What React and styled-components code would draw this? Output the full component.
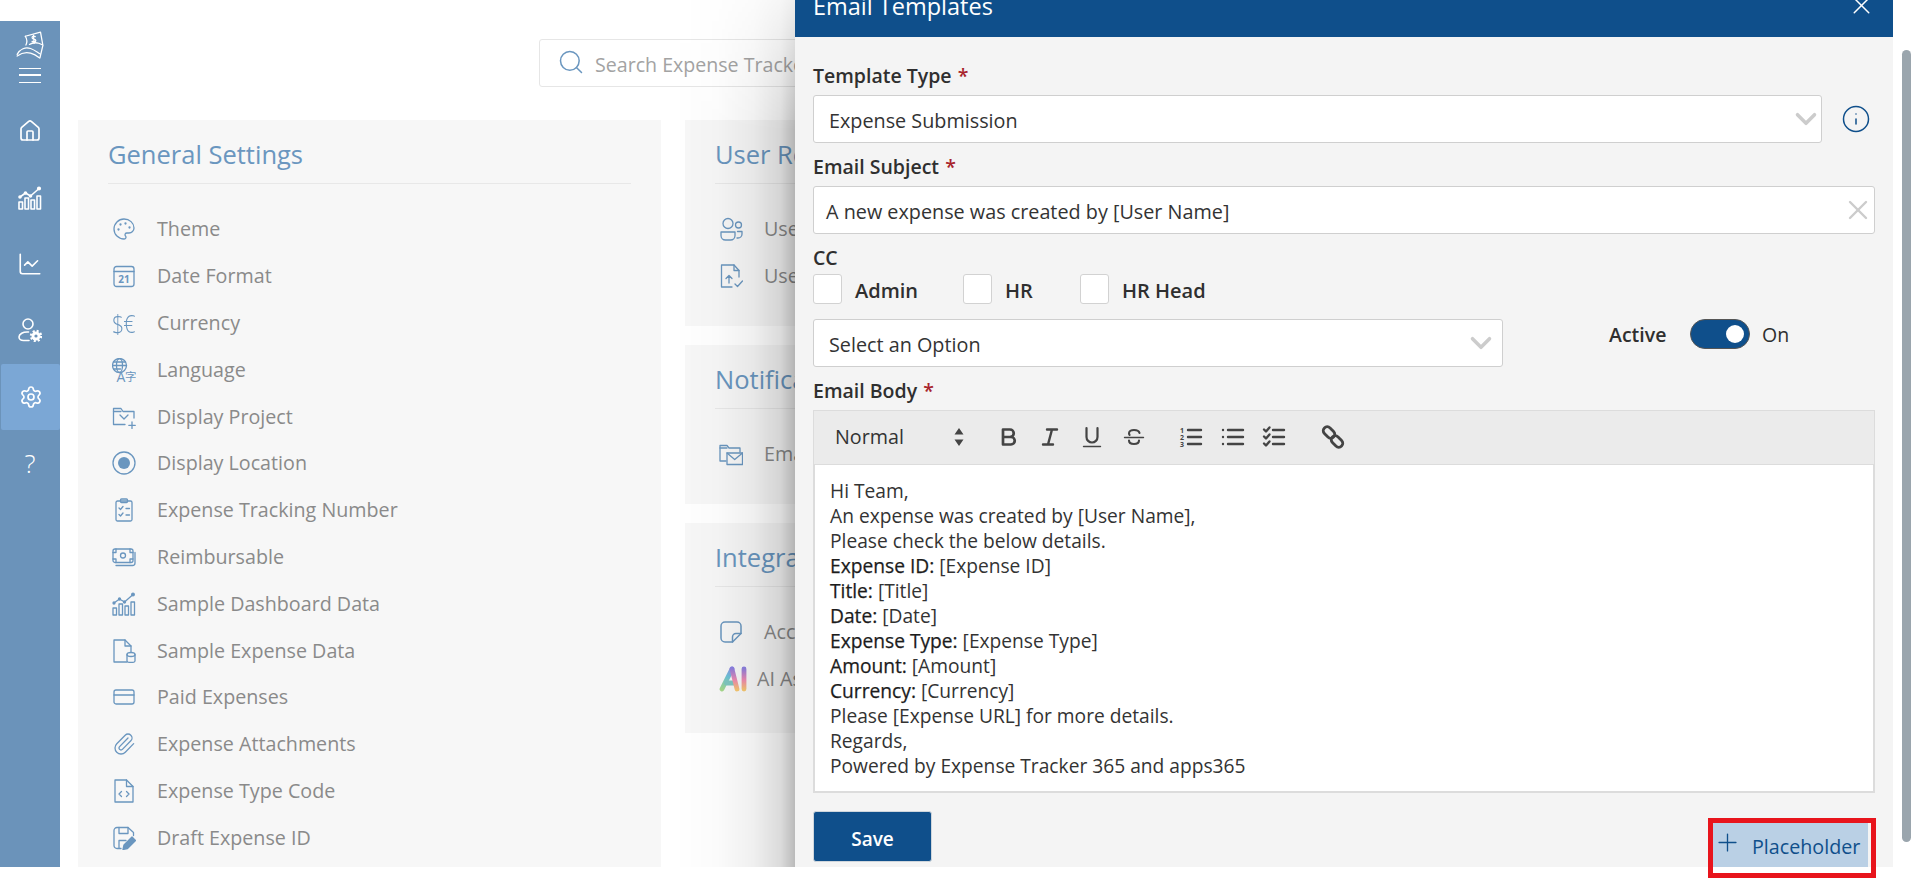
import React from 'react';
import styled, { createGlobalStyle } from 'styled-components';
import { House, ChartLine, Settings, Search, Palette, Paperclip, CreditCard, ChevronDown, X, Info, Plus } from 'lucide-react';

const accent = '#6a96bf';
const navy = '#0f4f8b';

const GlobalStyle = createGlobalStyle`
    html, body {
        margin: 0;
        padding: 0;
        background: #fff;
        overflow: hidden;
    }
    body {
        font-family: "Open Sans", "Liberation Sans", sans-serif;
    }
`
const Page = styled.div`
    position: relative;
    display: flex;
    box-sizing: border-box;
    width: 1917px;
    height: 878px;
    padding: 21px 0 11px;
    overflow: hidden;
`
const Rail = styled.nav`
    display: flex;
    flex-direction: column;
    flex: 0 0 60px;
    background: #6b93ba;
    color: #fff;
`
const RailTop = styled.div`
    display: flex;
    flex-direction: column;
    align-items: center;
    height: 77px;
    padding-top: 10px;
    box-sizing: border-box;
    gap: 9px;
`
const Burger = styled.div`
    width: 22px;
    height: 15px;
    border-top: 1.5px solid #fff;
    border-bottom: 1.5px solid #fff;
    box-sizing: border-box;
    position: relative;
    &::after {
        content: '';
        position: absolute;
        left: 0;
        right: 0;
        top: 5px;
        height: 1.5px;
        background: #fff;
    }
`
const RailItem = styled.div`
    display: flex;
    align-items: center;
    justify-content: center;
    height: 66.4px;
    margin-left: ${p => (p.$active ? '1px' : '0')};
    border-radius: 2px;
    background: ${p => (p.$active ? '#7ba7d5' : 'transparent')};
    font-size: 26px;
    font-weight: 300;
`
const Main = styled.main`
    display: flex;
    flex-direction: column;
    flex: 1;
    min-width: 0;
    padding: 18px 0 0 18px;
`
const SearchBox = styled.div`
    display: flex;
    align-items: center;
    gap: 10px;
    box-sizing: border-box;
    width: 620px;
    height: 48px;
    margin-left: 461px;
    padding: 2px 0 0 17px;
    border: 1px solid #e6e6e6;
    border-radius: 3px;
    color: #a3a3a3;
    font-size: 19.600px;
    white-space: nowrap;
    svg {
        color: ${accent};
        margin-top: -4px;
    }
`
const Columns = styled.div`
    display: grid;
    flex: 1;
    grid-template-columns: 583px 583px;
    gap: 24px;
    margin-top: 33px;
`
const Stack = styled.div`
    display: flex;
    flex-direction: column;
    gap: 19px;
`
const Card = styled.section`
    box-sizing: border-box;
    height: ${p => p.$height || 'auto'};
    padding: 0 30px;
    background: #f7f7f7;
`
const CardTitle = styled.h2`
    box-sizing: border-box;
    height: 64px;
    margin: 0;
    padding-top: 16px;
    border-bottom: 1px solid #e8e8e8;
    color: ${accent};
    font-size: 25.500px;
    line-height: 36px;
    font-weight: 400;
    white-space: nowrap;
`
const CardList = styled.div`
    padding-top: 22px;
`
const Row = styled.div`
    display: flex;
    align-items: center;
    gap: ${p => p.$gap || '21px'};
    height: 46.8px;
    padding-left: 4px;
    color: #8a8a8a;
    font-size: 19.700px;
    line-height: 28px;
    white-space: nowrap;
    svg {
        flex: none;
        color: ${accent};
    }
`
const CurrencyGlyph = styled.span`
    display: block;
    width: 24px;
    color: ${accent};
    font-size: 26px;
    font-weight: 300;
    letter-spacing: -1px;
    transform: scaleX(0.82);
    transform-origin: left center;
`
const Modal = styled.aside`
    position: absolute;
    top: 0;
    left: 795px;
    width: 1098px;
    height: 867px;
    background: #f4f4f4;
    &::before {
        content: '';
        position: absolute;
        top: 0;
        bottom: 0;
        right: 100%;
        width: 120px;
        background: linear-gradient(to left, rgba(0, 0, 0, 0.27), rgba(0, 0, 0, 0.14) 12%, rgba(0, 0, 0, 0.06) 35%, rgba(0, 0, 0, 0.015) 65%, transparent);
        mask-image: linear-gradient(to bottom, rgba(0, 0, 0, 0.25), #000 130px);
    }
`
const ModalHead = styled.header`
    display: flex;
    align-items: flex-end;
    justify-content: space-between;
    box-sizing: border-box;
    height: 37px;
    padding: 0 17px 17px 18px;
    background: ${navy};
    color: #fff;
`
const ModalTitle = styled.div`
    font-size: 23.500px;
    line-height: 28px;
    white-space: nowrap;
`
const ModalBody = styled.div`
    padding: 0 18px;
`
const Label = styled.div`
    height: 26px;
    margin: ${p => p.$margin || '0'};
    color: #2f2f2f;
    font-size: 19.500px;
    line-height: 28px;
    font-weight: 600;
    span {
        color: #a8242c;
        margin-left: 1px;
    }
`
const FieldRow = styled.div`
    display: flex;
    align-items: flex-start;
`
const Field = styled.div`
    display: flex;
    align-items: center;
    justify-content: space-between;
    box-sizing: border-box;
    width: ${p => p.$width};
    height: 48px;
    padding: 0 0 0 12px;
    border: 1px solid #cfcfcf;
    border-radius: 3px;
    background: #fff;
    color: #333;
    font-size: 19.800px;
    white-space: nowrap;
    svg {
        color: #cccccc;
        flex: none;
        margin-right: ${p => p.$iconEnd || '0'};
    }
`
const FieldText = styled.div`
    padding: 3px 0 0 ${p => p.$indent || '3px'};
`
const InfoButton = styled.div`
    display: flex;
    align-self: center;
    margin-left: 19px;
    color: ${navy};
`
const CheckRow = styled.div`
    display: flex;
    align-items: center;
    height: 30px;
    margin-bottom: 15px;
`
const CheckBox = styled.div`
    box-sizing: border-box;
    width: 29px;
    height: 30px;
    margin-right: 13px;
    border: 1px solid #d2d2d2;
    border-radius: 3px;
    background: #fff;
`
const CheckText = styled.div`
    width: ${p => p.$width};
    padding-top: 2px;
    color: #2f2f2f;
    font-size: 20px;
    font-weight: 600;
`
const ActiveGroup = styled.div`
    display: flex;
    align-items: center;
    margin-left: 106px;
    color: #2f2f2f;
    font-size: 19.500px;
`
const ActiveLabel = styled.div`
    width: 81px;
    font-weight: 600;
`
const Toggle = styled.div`
    position: relative;
    box-sizing: border-box;
    width: 60px;
    height: 30px;
    margin-right: 12px;
    border: 1px solid #555;
    border-radius: 15px;
    background: ${navy};
    &::after {
        content: '';
        position: absolute;
        top: 5px;
        right: 5px;
        width: 18px;
        height: 18px;
        border-radius: 50%;
        background: #fff;
    }
`
const Toolbar = styled.div`
    display: flex;
    align-items: center;
    box-sizing: border-box;
    height: 55px;
    padding: 0 0 2px 21px;
    border: 1px solid #dcdcdc;
    background: #ebebeb;
    color: #444;
`
const Picker = styled.div`
    display: flex;
    align-items: center;
    justify-content: space-between;
    box-sizing: border-box;
    width: 153px;
    padding-right: 24px;
    color: #333;
    font-size: 19.700px;
`
const ToolGroup = styled.div`
    display: flex;
    margin-right: ${p => p.$gap || '16px'};
`
const ToolButton = styled.div`
    display: flex;
    justify-content: center;
    width: 41.6px;
`
const Editor = styled.div`
    box-sizing: border-box;
    height: 328px;
    padding: 13px 15px;
    border: 2px solid #dcdcdc;
    border-top: 0;
    background: #fff;
    color: #333;
    font-size: 19.200px;
    line-height: 25px;
    white-space: nowrap;
    b {
        font-weight: 500;
        color: #1c1c1c;
        -webkit-text-stroke: 0.25px #1c1c1c;
    }
`
const Footer = styled.div`
    display: flex;
    align-items: flex-start;
    justify-content: space-between;
    margin-top: 18px;
`
const SaveButton = styled.button`
    box-sizing: border-box;
    width: 119px;
    height: 51px;
    padding-top: 5px;
    border: 1px solid #cfd6dc;
    border-radius: 3px;
    background: ${navy};
    color: #fff;
    font-family: inherit;
    font-size: 19px;
    font-weight: 600;
`
const PlaceholderButton = styled.div`
    position: relative;
    display: flex;
    align-items: center;
    gap: 10px;
    box-sizing: border-box;
    width: 155px;
    height: 45px;
    margin: 11px 7px 0 0;
    padding-top: 3px;
    background: #bad0e5;
    color: ${navy};
    font-size: 19.700px;
    svg {
        margin-top: -8px;
    }
    &::after {
        content: '';
        position: absolute;
        top: -4px;
        left: -5px;
        right: -8px;
        bottom: -11px;
        border: 5px solid #e8141c;
    }
`
const ScrollThumb = styled.div`
    position: absolute;
    top: 50px;
    left: 1902px;
    width: 9px;
    height: 792px;
    border-radius: 5px;
    background: #9aa5ad;
`

const Glyph = ({ size = 24, stroke = 1.3, box = '0 0 24 24', children }) => (
    <svg width={size} height={size} viewBox={box} fill="none" stroke="currentColor" strokeWidth={stroke} strokeLinecap="round" strokeLinejoin="round">
        {children}
    </svg>
);

const LogoIcon = () => (
    <Glyph size={28} stroke={1.1}>
        <path d="M8 4.500l13-3.500 2 11-3.500-1.500c-3-.8-6-.3-8 1" />
        <path d="M8 4.500c1.500 2.500 1.800 5 .5 7.500" />
        <path d="M1 20c2.500-4.500 7-6.500 11.500-5 3 1 5.500 3 8 4.500" />
        <path d="M1 21.500c4-3 8-3.500 11.500-2.500 3 .8 5 2 7.500 4" />
        <path d="M23 12.500l-2.500 10.500" />
        <path d="M16.500 4.800c-1-.8-2.700-.4-2.700 .9 0 1.600 3.200 .8 3.200 2.500 0 1.200-1.800 1.600-3.200 .7M15 3.500l.5 7" />
    </Glyph>
);
const ComboChart = ({ size = 24, stroke = 1.3 }) => (
    <Glyph size={size} stroke={stroke}>
        <rect x="1" y="16" width="3.500" height="7" />
        <rect x="7" y="12" width="3.500" height="11" />
        <rect x="13" y="14" width="3.500" height="9" />
        <rect x="19" y="10" width="3.500" height="13" />
        <path d="M2 11l5.500-4 5 3 8-7" />
        <circle cx="2" cy="11" r="1" fill="currentColor" />
        <circle cx="7.500" cy="7" r="1" fill="currentColor" />
        <circle cx="12.500" cy="10" r="1" fill="currentColor" />
        <circle cx="21" cy="2.500" r="1.300" fill="currentColor" />
    </Glyph>
);
const UserGear = () => (
    <svg width="24" height="24" viewBox="0 0 24 24" fill="none" stroke="currentColor" strokeWidth="1.600" strokeLinecap="round">
        <circle cx="10" cy="6" r="5" />
        <path d="M11 22.500H5.500C3 22.500 1 21 1 19 1 16 5 13.500 10.500 14" />
        <circle cx="18" cy="18" r="4.500" fill="currentColor" stroke="none" />
        <circle cx="18" cy="18" r="5" strokeWidth="2.400" strokeDasharray="2 1.930" strokeLinecap="butt" />
        <circle cx="18" cy="18" r="1.600" fill="#6b93ba" stroke="none" />
    </svg>
);
const CalendarIcon = () => (
    <Glyph>
        <rect x="2" y="2.500" width="20" height="20" rx="2.500" />
        <path d="M2 7.500h20" />
        <text x="12" y="19" textAnchor="middle" fontSize="10" fontWeight="700" fill="currentColor" stroke="none" fontFamily="Open Sans">21</text>
    </Glyph>
);
const LanguageIcon = () => (
    <Glyph>
        <circle cx="7.500" cy="7.500" r="7" />
        <ellipse cx="7.500" cy="7.500" rx="3" ry="7" />
        <path d="M.5 7.500h14M1.500 4h12M1.500 11h7" />
        <text x="4.500" y="23.500" fontSize="14" fill="currentColor" stroke="none" fontFamily="Open Sans">A</text>
        <text x="13" y="23" fontSize="11.500" fill="currentColor" stroke="none" fontFamily="Noto Sans CJK SC">字</text>
    </Glyph>
);
const FolderPlus = () => (
    <Glyph>
        <path d="M22 13V6.500H11L9 3.500H1.500v16H13" />
        <path d="M1.500 6.500H9" />
        <path d="M8 10l4 4 4-4" />
        <path d="M20 17v6.500M16.800 20.300h6.500" />
    </Glyph>
);
const LocationIcon = () => (
    <Glyph>
        <circle cx="12" cy="12" r="11" />
        <circle cx="12" cy="12" r="6" fill="currentColor" stroke="none" />
    </Glyph>
);
const TrackIcon = () => (
    <Glyph>
        <rect x="4" y="3" width="16" height="20" rx="1.500" />
        <rect x="8.500" y="1" width="7" height="3.500" rx="1" />
        <path d="M7 10l1.500 1.500L11 8.500M14 10.500h3.500M7 16.500l1.500 1.500 2.500-3M14 17h3.500" />
    </Glyph>
);
const CashIcon = () => (
    <Glyph>
        <rect x="1" y="4" width="20" height="13.500" rx="2" />
        <circle cx="11" cy="10.500" r="2.500" />
        <path d="M1 7.500h3V4M1 14h3v3.500M21 7.500h-3V4M21 14h-3v3.500" />
        <path d="M23 7.500v10.500a2.500 2.500 0 0 1-2.500 2.500H4" />
    </Glyph>
);
const FileDb = () => (
    <Glyph>
        <path d="M15 23H2V1h11l6 6v6" />
        <path d="M13 1v6h6" />
        <ellipse cx="19" cy="15.500" rx="4" ry="2" />
        <path d="M15 15.500V22c0 1 2 1.500 4 1.500s4-.5 4-1.500v-6.500" />
    </Glyph>
);
const FileCodeIcon = () => (
    <Glyph>
        <path d="M14.500 1H3v22h18V7.500z" />
        <path d="M14.500 1v6.500H21" />
        <path d="M9.500 12.500L7 15l2.500 2.500M14.500 12.500L17 15l-2.500 2.500" />
    </Glyph>
);
const DraftIcon = () => (
    <Glyph>
        <path d="M9 22.500H5A3 3 0 0 1 2 19.500V4.500A3 3 0 0 1 5 1.500h11l5.500 5v3" />
        <path d="M7 1.500v6h9v-6M7 22v-7.500h7" />
        <path d="M11 23.500l1-4.500 8-8 3.500 3.500-8 8z" fill="currentColor" />
    </Glyph>
);
const UsersIcon = () => (
    <Glyph>
        <circle cx="9" cy="6.500" r="5" />
        <circle cx="19.500" cy="8" r="3" />
        <path d="M2 15h14v3.500a4.500 4.500 0 0 1-4.500 4.500h-5A4.500 4.500 0 0 1 2 18.500z" />
        <path d="M18.500 14.500H23v2.500a4 4 0 0 1-4 4h-1" />
    </Glyph>
);
const FileUpload = () => (
    <Glyph>
        <path d="M13 23H2.500V1H15l5 5.500V13" />
        <path d="M15 1v5.500h5" />
        <path d="M10 19v-7M7 14.500l3-3 3 3" />
        <path d="M16 20l2.500 2.500L23.500 17" />
    </Glyph>
);
const FolderMail = () => (
    <Glyph>
        <path d="M7 19H1V3.500h7l2 2.500h11v4" />
        <path d="M1 6h7" />
        <rect x="8" y="11" width="15.500" height="11.500" />
        <path d="M8 11l7.700 6.500L23.500 11" />
    </Glyph>
);
const NoteIcon = () => (
    <Glyph stroke={1.500}>
        <path d="M2 6a4 4 0 0 1 4-4h12a4 4 0 0 1 4 4v7.500L13.500 22H6a4 4 0 0 1-4-4z" />
        <path d="M22 13.500h-5a3.500 3.500 0 0 0-3.500 3.500v5" />
    </Glyph>
);
const AiIcon = () => (
    <svg width="28" height="26" viewBox="0 0 28 26" fill="none" strokeWidth="4.800" strokeLinecap="round" strokeLinejoin="round">
        <defs>
            <linearGradient id="aiLeft" gradientUnits="userSpaceOnUse" x1="3" y1="24" x2="13" y2="2">
                <stop offset="0" stopColor="#a5d88a" />
                <stop offset="0.6" stopColor="#6cc3d6" />
                <stop offset="1" stopColor="#8f8fe8" />
            </linearGradient>
            <linearGradient id="aiRight" gradientUnits="userSpaceOnUse" x1="0" y1="2" x2="0" y2="24">
                <stop offset="0" stopColor="#8b7fe0" />
                <stop offset="0.55" stopColor="#f08bb0" />
                <stop offset="1" stopColor="#f7c770" />
            </linearGradient>
        </defs>
        <path d="M3 23L13 3" stroke="url(#aiLeft)" />
        <path d="M7.500 17h8" stroke="#7fc6c0" />
        <path d="M13 3l5 20" stroke="url(#aiRight)" />
        <path d="M25 3v20" stroke="url(#aiRight)" />
    </svg>
);

const BoldIcon = () => <Glyph stroke={2.700}><path d="M6 4.500h7a3.700 3.700 0 0 1 0 7.500H6zM6 12h8a3.700 3.700 0 0 1 0 7.500H6z" /></Glyph>;
const ItalicIcon = () => <Glyph stroke={2.400}><path d="M9 4.500h10M5 19.500h10M14 4.500l-4 15" /></Glyph>;
const UnderlineIcon = () => <Glyph stroke={2.200}><path d="M6.500 3v9a5.500 5.500 0 0 0 11 0V3" /><path d="M3.500 21.500h17" strokeWidth="1.400" /></Glyph>;
const StrikeIcon = () => <Glyph stroke={2.100}><path d="M17.500 8c-.5-1.800-2.500-3-5.500-3s-5 1.300-5 3.200c0 .6.200 1.200.6 1.800M7 15.500c0 2 2 3.500 5 3.500s5-1.500 5-3.500" /><path d="M2.500 12.500h19" strokeWidth="1.400" /></Glyph>;
const OrderedIcon = () => (
    <Glyph stroke={2.400}>
        <path d="M9 5h13M9 12h13M9 19h13" />
        <text x="1" y="7.500" fontSize="7" fontWeight="700" fill="currentColor" stroke="none" fontFamily="Open Sans">1</text>
        <text x="1" y="14.500" fontSize="7" fontWeight="700" fill="currentColor" stroke="none" fontFamily="Open Sans">2</text>
        <text x="1" y="21.500" fontSize="7" fontWeight="700" fill="currentColor" stroke="none" fontFamily="Open Sans">3</text>
    </Glyph>
);
const BulletIcon = () => (
    <Glyph stroke={2.400}>
        <path d="M7 5h15M7 12h15M7 19h15" />
        <path d="M2 5h.01M2 12h.01M2 19h.01" />
    </Glyph>
);
const ChecklistIcon = () => (
    <Glyph stroke={2.400}>
        <path d="M11 5h11M11 12h11M11 19h11" />
        <path d="M2 4.500l2 2 3.500-4M2 11.500l2 2 3.500-4M2 18.500l2 2 3.500-4" />
    </Glyph>
);
const LinkIcon = () => (
    <Glyph stroke={2.800}>
        <rect x="1.500" y="3.500" width="13" height="8" rx="4" transform="rotate(45 8 7.500)" />
        <rect x="9.500" y="12.500" width="13" height="8" rx="4" transform="rotate(45 16 16.500)" />
    </Glyph>
);
const SortIcon = () => (
    <svg width="10" height="20" viewBox="0 0 10 20" fill="#444">
        <path d="M5 1l4.500 6.500h-9zM5 19L.5 12.500h9z" />
    </svg>
);

const generalItems = [
    ['Theme', <Palette size={24} strokeWidth={1.3} />],
    ['Date Format', <CalendarIcon />],
    ['Currency', <CurrencyGlyph>$€</CurrencyGlyph>],
    ['Language', <LanguageIcon />],
    ['Display Project', <FolderPlus />],
    ['Display Location', <LocationIcon />],
    ['Expense Tracking Number', <TrackIcon />],
    ['Reimbursable', <CashIcon />],
    ['Sample Dashboard Data', <ComboChart />],
    ['Sample Expense Data', <FileDb />],
    ['Paid Expenses', <CreditCard size={24} strokeWidth={1.3} />],
    ['Expense Attachments', <Paperclip size={24} strokeWidth={1.3} />],
    ['Expense Type Code', <FileCodeIcon />],
    ['Draft Expense ID', <DraftIcon />],
];

const bodyLines = [
    ['', 'Hi Team,'],
    ['', 'An expense was created by [User Name],'],
    ['', 'Please check the below details.'],
    ['Expense ID:', ' [Expense ID]'],
    ['Title:', ' [Title]'],
    ['Date:', ' [Date]'],
    ['Expense Type:', ' [Expense Type]'],
    ['Amount:', ' [Amount]'],
    ['Currency:', ' [Currency]'],
    ['', 'Please [Expense URL] for more details.'],
    ['', 'Regards,'],
    ['', 'Powered by Expense Tracker 365 and apps365'],
];

const App = () => {
    return (
        <Page>
            <GlobalStyle />
            <Rail>
                <RailTop>
                    <LogoIcon />
                    <Burger />
                </RailTop>
                <RailItem><House size={24} strokeWidth={1.7} /></RailItem>
                <RailItem><ComboChart stroke={1.6} /></RailItem>
                <RailItem><ChartLine size={26} strokeWidth={1.5} /></RailItem>
                <RailItem><UserGear /></RailItem>
                <RailItem $active><Settings size={24} strokeWidth={1.7} /></RailItem>
                <RailItem>?</RailItem>
            </Rail>
            <Main>
                <SearchBox>
                    <Search size={28} strokeWidth={1.3} />
                    Search Expense Tracker 365
                </SearchBox>
                <Columns>
                    <Card>
                        <CardTitle>General Settings</CardTitle>
                        <CardList>
                            {generalItems.map(([text, icon]) => (
                                <Row key={text}>{icon}{text}</Row>
                            ))}
                        </CardList>
                    </Card>
                    <Stack>
                        <Card $height="206px">
                            <CardTitle>User Roles</CardTitle>
                            <CardList>
                                <Row><UsersIcon />Users</Row>
                                <Row><FileUpload />User Upload</Row>
                            </CardList>
                        </Card>
                        <Card $height="159px">
                            <CardTitle>Notifications</CardTitle>
                            <CardList>
                                <Row><FolderMail />Email Templates</Row>
                            </CardList>
                        </Card>
                        <Card $height="210px">
                            <CardTitle>Integrations</CardTitle>
                            <CardList>
                                <Row><NoteIcon />Accounting</Row>
                                <Row $gap="10px"><AiIcon />AI Assistant</Row>
                            </CardList>
                        </Card>
                    </Stack>
                </Columns>
            </Main>
            <Modal>
                <ModalHead>
                    <ModalTitle>Email Templates</ModalTitle>
                    <X size={29} strokeWidth={1.2} />
                </ModalHead>
                <ModalBody>
                    <Label $margin="25px 0 7px">Template Type <span>*</span></Label>
                    <FieldRow>
                        <Field $width="1009px" $iconEnd="-2px">
                            <FieldText>Expense Submission</FieldText>
                            <ChevronDown size={34} strokeWidth={2.5} />
                        </Field>
                        <InfoButton><Info size={30} strokeWidth={1.2} /></InfoButton>
                    </FieldRow>
                    <Label $margin="10px 0 7px">Email Subject <span>*</span></Label>
                    <Field $width="1062px">
                        <FieldText $indent="0">A new expense was created by [User Name]</FieldText>
                        <X size={32} strokeWidth={1.800} />
                    </Field>
                    <Label $margin="10px 0 4px">CC</Label>
                    <CheckRow>
                        <CheckBox /><CheckText $width="108px">Admin</CheckText>
                        <CheckBox /><CheckText $width="75px">HR</CheckText>
                        <CheckBox /><CheckText>HR Head</CheckText>
                    </CheckRow>
                    <FieldRow>
                        <Field $width="690px" $iconEnd="4px">
                            <FieldText>Select an Option</FieldText>
                            <ChevronDown size={34} strokeWidth={2.5} />
                        </Field>
                        <ActiveGroup>
                            <ActiveLabel>Active</ActiveLabel>
                            <Toggle />
                            On
                        </ActiveGroup>
                    </FieldRow>
                    <Label $margin="10px 0 7px">Email Body <span>*</span></Label>
                    <Toolbar>
                        <Picker>Normal<SortIcon /></Picker>
                        <ToolGroup>
                            <ToolButton><BoldIcon /></ToolButton>
                            <ToolButton><ItalicIcon /></ToolButton>
                            <ToolButton><UnderlineIcon /></ToolButton>
                            <ToolButton><StrikeIcon /></ToolButton>
                        </ToolGroup>
                        <ToolGroup $gap="17px">
                            <ToolButton><OrderedIcon /></ToolButton>
                            <ToolButton><BulletIcon /></ToolButton>
                            <ToolButton><ChecklistIcon /></ToolButton>
                        </ToolGroup>
                        <ToolGroup>
                            <ToolButton><LinkIcon /></ToolButton>
                        </ToolGroup>
                    </Toolbar>
                    <Editor>
                        {bodyLines.map(([bold, rest]) => (
                            <div key={bold + rest}>{bold && <b>{bold}</b>}{rest}</div>
                        ))}
                    </Editor>
                    <Footer>
                        <SaveButton>Save</SaveButton>
                        <PlaceholderButton><Plus size={29} strokeWidth={1.1} />Placeholder</PlaceholderButton>
                    </Footer>
                </ModalBody>
            </Modal>
            <ScrollThumb />
        </Page>
    );
}

export default App;
